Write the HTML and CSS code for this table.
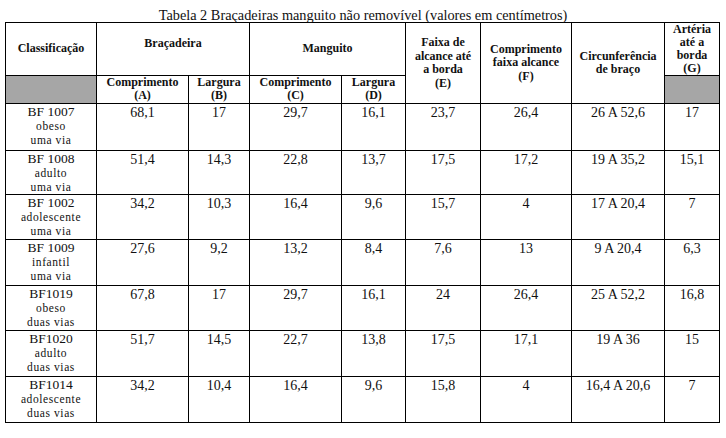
FILE: index.html
```html
<!DOCTYPE html>
<html lang="pt">
<head>
<meta charset="utf-8">
<title>Tabela 2</title>
<link rel="stylesheet" href="styles.css">
</head>
<body>
<div class="caption">Tabela 2 Braçadeiras manguito não removível (valores em centímetros)</div>
<table class="tbl">
  <colgroup>
    <col class="c1"><col class="c2"><col class="c3"><col class="c4"><col class="c5"><col class="c6"><col class="c7"><col class="c8"><col class="c9">
  </colgroup>
  <thead>
    <tr class="h1">
      <th class="mid">Classificação</th>
      <th colspan="2" class="topish">Braçadeira</th>
      <th colspan="2" class="mid">Manguito</th>
      <th rowspan="2" class="mid">Faixa de<br>alcance até<br>a borda<br>(E)</th>
      <th rowspan="2" class="mid">Comprimento<br>faixa alcance<br>(F)</th>
      <th rowspan="2" class="mid">Circunferência<br>de braço</th>
      <th class="mid tight">Artéria<br>até a<br>borda<br>(G)</th>
    </tr>
    <tr class="h2">
      <th class="grey"></th>
      <th class="sub">Comprimento<br>(A)</th>
      <th class="sub">Largura<br>(B)</th>
      <th class="sub">Comprimento<br>(C)</th>
      <th class="sub">Largura<br>(D)</th>
      <th class="grey"></th>
    </tr>
  </thead>
  <tbody>
    <tr class="r47">
      <td class="cls"><span class="code">BF 1007</span><br>obeso<br>uma via</td>
      <td>68,1</td><td>17</td><td>29,7</td><td>16,1</td><td>23,7</td><td>26,4</td><td>26 A 52,6</td><td>17</td>
    </tr>
    <tr class="r44">
      <td class="cls"><span class="code">BF 1008</span><br>adulto<br>uma via</td>
      <td>51,4</td><td>14,3</td><td>22,8</td><td>13,7</td><td>17,5</td><td>17,2</td><td>19 A 35,2</td><td>15,1</td>
    </tr>
    <tr class="r45">
      <td class="cls"><span class="code">BF 1002</span><br>adolescente<br>uma via</td>
      <td>34,2</td><td>10,3</td><td>16,4</td><td>9,6</td><td>15,7</td><td>4</td><td>17 A 20,4</td><td>7</td>
    </tr>
    <tr class="r46">
      <td class="cls"><span class="code">BF 1009</span><br>infantil<br>uma via</td>
      <td>27,6</td><td>9,2</td><td>13,2</td><td>8,4</td><td>7,6</td><td>13</td><td>9 A 20,4</td><td>6,3</td>
    </tr>
    <tr class="r45">
      <td class="cls"><span class="code">BF1019</span><br>obeso<br>duas vias</td>
      <td>67,8</td><td>17</td><td>29,7</td><td>16,1</td><td>24</td><td>26,4</td><td>25 A 52,2</td><td>16,8</td>
    </tr>
    <tr class="r46">
      <td class="cls"><span class="code">BF1020</span><br>adulto<br>duas vias</td>
      <td>51,7</td><td>14,5</td><td>22,7</td><td>13,8</td><td>17,5</td><td>17,1</td><td>19 A 36</td><td>15</td>
    </tr>
    <tr class="r46">
      <td class="cls"><span class="code">BF1014</span><br>adolescente<br>duas vias</td>
      <td>34,2</td><td>10,4</td><td>16,4</td><td>9,6</td><td>15,8</td><td>4</td><td>16,4 A 20,6</td><td>7</td>
    </tr>
  </tbody>
</table>
</body>
</html>
```
FILE: styles.css
```css
html, body {
  margin: 0;
  padding: 0;
  background: #ffffff;
}
body {
  font-family: "Liberation Serif", "Times New Roman", serif;
  color: #111111;
  width: 726px;
  height: 438px;
  overflow: hidden;
}
.caption {
  padding-top: 8px;
  height: 14px;
  line-height: 14px;
  font-size: 14.3px;
  text-align: center;
}
.tbl {
  margin-left: 5px;
  width: 715px;
  border-collapse: collapse;
  table-layout: fixed;
}
.c1 { width: 91px; }
.c2 { width: 92px; }
.c3 { width: 61px; }
.c4 { width: 92px; }
.c5 { width: 64px; }
.c6 { width: 75px; }
.c7 { width: 91px; }
.c8 { width: 93px; }
.c9 { width: 55px; }
.tbl th, .tbl td {
  border: 1px solid #000000;
  padding: 0 1px;
  text-align: center;
  overflow: hidden;
}
.tbl th {
  font-weight: bold;
  font-size: 12px;
  line-height: 13.5px;
}
.h1 th { height: 52px; }
.h2 th { height: 27px; }
.tbl th.mid { vertical-align: middle; }
.tbl th.tight { line-height: 13px; }
.tbl th.topish {
  vertical-align: top;
  padding-top: 14px;
  height: 38px;
}
.tbl th.sub {
  vertical-align: top;
  line-height: 13.4px;
  padding-top: 0;
  height: 27px;
}
.tbl th.grey { background: #a6a6a6; }
.tbl td {
  vertical-align: top;
  font-size: 14px;
  line-height: 15px;
  padding-top: 1px;
}
.tbl td.cls {
  font-size: 11.5px;
  letter-spacing: 0.6px;
  line-height: 14px;
}
.code {
  font-size: 13.5px;
  letter-spacing: 0;
}
.r47 td { height: 45px; }
.r44 td { height: 42px; }
.r45 td { height: 43px; }
.r46 td { height: 44px; }
```
